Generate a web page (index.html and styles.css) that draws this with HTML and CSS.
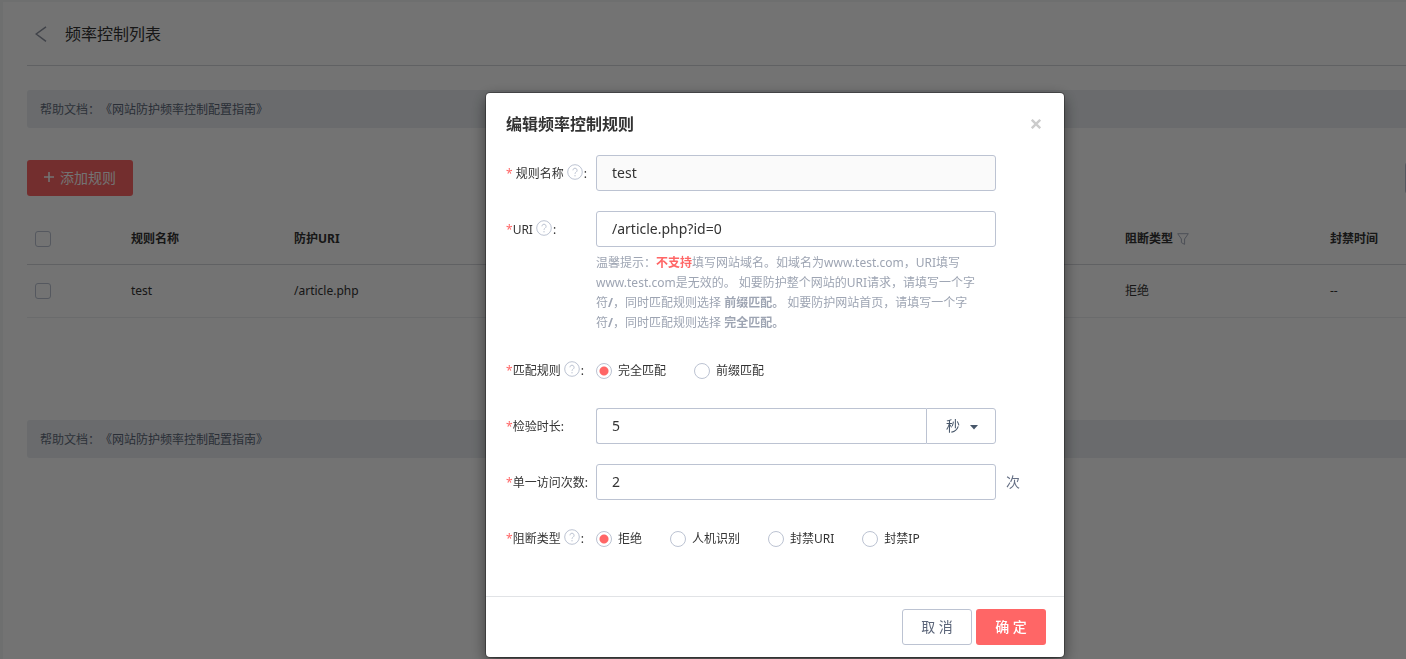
FILE: index.html
```html
<!DOCTYPE html>
<html lang="zh-CN">
<head>
<meta charset="utf-8">
<title>频率控制列表</title>
<link rel="stylesheet" href="styles.css">
</head>
<body>
<div class="viewport">
  <main class="page">
    <header class="page-header">
      <button class="back" type="button" aria-label="返回">
        <svg width="12" height="16" viewBox="0 0 12 16"><path d="M11 .8 1.2 8 11 15.4" fill="none" stroke="currentColor" stroke-width="1.5"/></svg>
      </button>
      <h1 class="page-title">频率控制列表</h1>
    </header>

    <p class="help-bar">帮助文档：<a class="help-link" href="#guide">《网站防护频率控制配置指南》</a></p>

    <div class="toolbar">
      <button class="btn btn-add" type="button">
        <svg width="10" height="10" viewBox="0 0 10 10"><path d="M5 0v10M0 5h10" stroke="currentColor" stroke-width="1.6"/></svg>
        添加规则
      </button>
      <input class="search" type="search" aria-label="搜索">
    </div>

    <table class="rules">
      <colgroup><col class="col-check"><col class="col-name"><col class="col-uri"><col class="col-type"><col></colgroup>
      <thead>
        <tr>
          <th class="check-cell"><input class="checkbox" type="checkbox" aria-label="全选"></th>
          <th>规则名称</th>
          <th>防护URI</th>
          <th><span class="th-filter">阻断类型<svg width="12" height="12" viewBox="0 0 12 12"><path d="M.7.7h10.6L7.6 6v5.4L4.4 9.6V6z" fill="none" stroke="currentColor" stroke-linejoin="round"/></svg></span></th>
          <th>封禁时间</th>
        </tr>
      </thead>
      <tbody>
        <tr>
          <td class="check-cell"><input class="checkbox" type="checkbox" aria-label="选择 test"></td>
          <td>test</td>
          <td>/article.php</td>
          <td>拒绝</td>
          <td>--</td>
        </tr>
      </tbody>
    </table>

    <p class="help-bar">帮助文档：<a class="help-link" href="#guide">《网站防护频率控制配置指南》</a></p>
  </main>
</div>

<div class="backdrop">
  <form class="modal" role="dialog" aria-labelledby="dialog-title">
    <header class="modal-header">
      <h2 class="modal-title" id="dialog-title">编辑频率控制规则</h2>
      <button class="close" type="button" aria-label="关闭">
        <svg width="10" height="10" viewBox="0 0 10 10"><path d="m.8.8 8.4 8.4M9.2.8.8 9.2" stroke="currentColor" stroke-width="2.4"/></svg>
      </button>
    </header>

    <div class="modal-body">
      <div class="row">
        <label class="row-label" for="name"><span class="star">*</span>&nbsp;规则名称<svg class="tip" viewBox="0 0 16 16"><circle cx="8" cy="8" r="7.3"/><path d="M5.9 6.3a2.1 2.1 0 1 1 3.2 1.8Q8 8.8 8 9.8M8 11v1.4"/></svg>:</label>
        <input class="field" id="name" type="text" value="test" readonly>
      </div>

      <div class="row">
        <label class="row-label" for="uri"><span class="star">*</span>URI<svg class="tip" viewBox="0 0 16 16"><circle cx="8" cy="8" r="7.3"/><path d="M5.9 6.3a2.1 2.1 0 1 1 3.2 1.8Q8 8.8 8 9.8M8 11v1.4"/></svg>:</label>
        <div class="row-content">
          <input class="field" id="uri" type="text" value="/article.php?id=0">
          <p class="hint">温馨提示：<strong class="warn">不支持</strong>填写网站域名。如域名为www.test.com，URI填写<br>www.test.com是无效的。 如要防护整个网站的URI请求，请填写一个字<br>符<strong>/</strong>，同时匹配规则选择 <strong>前缀匹配。</strong> 如要防护网站首页，请填写一个字<br>符<strong>/</strong>，同时匹配规则选择 <strong>完全匹配。</strong></p>
        </div>
      </div>

      <div class="row" role="radiogroup" aria-labelledby="match-label">
        <span class="row-label" id="match-label"><span class="star">*</span>匹配规则<svg class="tip" viewBox="0 0 16 16"><circle cx="8" cy="8" r="7.3"/><path d="M5.9 6.3a2.1 2.1 0 1 1 3.2 1.8Q8 8.8 8 9.8M8 11v1.4"/></svg>:</span>
        <div class="radios">
          <label class="option"><input class="radio" type="radio" name="match" checked>完全匹配</label>
          <label class="option"><input class="radio" type="radio" name="match">前缀匹配</label>
        </div>
      </div>

      <div class="row">
        <label class="row-label" for="duration"><span class="star">*</span>检验时长:</label>
        <div class="group">
          <input class="field" id="duration" type="text" value="5">
          <div class="unit">
            <select class="unit-select" aria-label="时间单位"><option>秒</option><option>分</option></select>
            <svg class="caret" width="8" height="5" viewBox="0 0 8 5"><path d="M0 0h8L4 4.5z" fill="currentColor"/></svg>
          </div>
        </div>
      </div>

      <div class="row">
        <label class="row-label" for="count"><span class="star">*</span>单一访问次数:</label>
        <input class="field" id="count" type="text" value="2">
        <span class="suffix">次</span>
      </div>

      <div class="row" role="radiogroup" aria-labelledby="block-label">
        <span class="row-label" id="block-label"><span class="star">*</span>阻断类型<svg class="tip" viewBox="0 0 16 16"><circle cx="8" cy="8" r="7.3"/><path d="M5.9 6.3a2.1 2.1 0 1 1 3.2 1.8Q8 8.8 8 9.8M8 11v1.4"/></svg>:</span>
        <div class="radios">
          <label class="option"><input class="radio" type="radio" name="block" checked>拒绝</label>
          <label class="option"><input class="radio" type="radio" name="block">人机识别</label>
          <label class="option"><input class="radio" type="radio" name="block">封禁URI</label>
          <label class="option"><input class="radio" type="radio" name="block">封禁IP</label>
        </div>
      </div>
    </div>

    <footer class="modal-footer">
      <button class="btn btn-cancel" type="button">取 消</button>
      <button class="btn btn-ok" type="submit">确 定</button>
    </footer>
  </form>
</div>
</body>
</html>
```

FILE: styles.css
```css
* { box-sizing: border-box; }

body, button, input, select {
  font-family: "Noto Sans", "Noto Sans CJK SC", sans-serif;
}

body {
  margin: 0;
  background: #f3f6f6;
  color: #333;
  font-size: 12px;
  line-height: 20px;
  text-spacing-trim: space-all;
  overflow: hidden;
}

h1, h2, p { margin: 0; }

button, input, select { margin: 0; }

.viewport {
  height: 100vh;
  overflow: hidden;
  padding: 2px 0 0 3px;
}

.page {
  min-width: 1550px;
  min-height: 100%;
  padding: 0 24px;
  background: #fff;
}

.page-header {
  display: flex;
  align-items: center;
  gap: 18px;
  height: 64px;
  padding-left: 8px;
  border-bottom: 1px solid #d5d7dc;
}

.back {
  display: flex;
  padding: 0;
  border: 0;
  background: none;
  color: #8f95a3;
}

.page-title {
  font-size: 16px;
  font-weight: 400;
}

.help-bar {
  margin-top: 24px;
  padding: 10px 13px 8px;
  border-radius: 3px;
  background: #ebeef2;
  color: #66707f;
}

.help-link {
  color: #5c6779;
  text-decoration: none;
}

.toolbar {
  display: flex;
  justify-content: space-between;
  align-items: center;
  margin: 32px 0 16px;
}

.btn {
  height: 36px;
  padding: 0 0 2px;
  border: 1px solid transparent;
  border-radius: 3px;
  font-size: 14px;
}

.btn-add {
  display: flex;
  align-items: center;
  justify-content: center;
  gap: 6px;
  width: 106px;
  background: #f66;
  color: #fff;
}

.search {
  width: 124px;
  height: 32px;
  border: 1px solid #bcc3d2;
  border-radius: 3px;
}

.rules {
  width: 100%;
  table-layout: fixed;
  border-collapse: collapse;
  margin-bottom: 102px;
}

.col-check { width: 88px; }
.col-name { width: 163px; }
.col-uri { width: 831px; }
.col-type { width: 205px; }

.rules th, .rules td {
  height: 53px;
  padding: 0 16px;
  border-bottom: 1px solid #ebedf0;
  text-align: left;
}

.rules th {
  height: 52px;
  padding-top: 2px;
  border-color: #d5d7dc;
}

.rules .check-cell {
  padding-left: 8px;
  padding-right: 8px;
}

.th-filter {
  display: flex;
  align-items: center;
  gap: 4px;
}

.th-filter svg { color: #a9b0c0; }

.checkbox, .radio {
  appearance: none;
  display: block;
  flex: none;
  width: 16px;
  height: 16px;
  border: 1px solid #bcc3d2;
  background: #fff;
}

.checkbox { border-radius: 3px; }
.radio { border-radius: 50%; }

.radio:checked {
  background: radial-gradient(circle, #f66 4px, #fff 5px);
}

.backdrop {
  position: fixed;
  inset: 0;
  display: grid;
  grid-template-columns: 486fr 578px 342fr;
  align-items: start;
  padding-top: 93px;
  background: rgba(0, 0, 0, .55);
}

.modal {
  grid-column: 2;
  border-radius: 4px;
  background: #fff;
  box-shadow: 0 0 0 1px rgba(0, 0, 0, .3), 0 5px 15px rgba(0, 0, 0, .5);
}

.modal-header {
  display: flex;
  align-items: center;
  justify-content: space-between;
  height: 62px;
  padding: 0 23px 0 20px;
}

.modal-title {
  font-size: 16px;
  font-weight: 700;
}

.close {
  display: flex;
  padding: 0;
  border: 0;
  background: none;
  color: #ccc;
}

.modal-body {
  display: grid;
  gap: 20px;
  padding: 0 20px 40px;
}

.row {
  display: flex;
  align-items: flex-start;
}

.row-label {
  display: flex;
  align-items: center;
  flex: none;
  width: 90px;
  height: 36px;
  padding-top: 2px;
  white-space: nowrap;
}

.star { color: #f66; }

.tip {
  width: 16px;
  height: 16px;
  margin: 0 1px 4px 3px;
  fill: none;
  stroke: #bcc3d2;
}

.row-content, .group, .row > .field { width: 400px; }

.field {
  display: block;
  width: 100%;
  height: 36px;
  padding: 0 15px 2px;
  border: 1px solid #bcc3d2;
  border-radius: 3px;
  background: #fff;
  color: #333;
  font-size: 14px;
}

.field:read-only { background: #fafafa; }

.hint {
  padding-top: 6px;
  margin-bottom: -1px;
  color: #9ea5b3;
  white-space: nowrap;
}

.hint .warn { color: #f66; }

.radios {
  display: flex;
  align-items: center;
  gap: 28px;
  height: 36px;
  padding-top: 2px;
}

.option {
  display: flex;
  align-items: center;
  gap: 6px;
}

.group { display: flex; }

.group .field {
  flex: 1;
  border-right: 0;
  border-radius: 3px 0 0 3px;
}

.unit {
  position: relative;
  width: 70px;
}

.unit-select {
  appearance: none;
  width: 100%;
  height: 36px;
  padding: 0 19px 2px;
  border: 1px solid #bcc3d2;
  border-radius: 0 3px 3px 0;
  background: #fff;
  color: #475669;
  font-size: 14px;
}

.caret {
  position: absolute;
  top: 17px;
  right: 18px;
  color: #475669;
  pointer-events: none;
}

.suffix {
  margin-left: 10px;
  color: #667085;
  font-size: 14px;
  line-height: 36px;
}

.modal-footer {
  display: flex;
  justify-content: flex-end;
  gap: 4px;
  padding: 12px 18px;
  border-top: 1px solid #e1e3e6;
}

.btn-cancel, .btn-ok { width: 70px; }

.btn-cancel {
  border-color: #bcc3d2;
  background: #fff;
  color: #5b6579;
}

.btn-ok {
  background: #f66;
  color: #fff;
  font-weight: 500;
}
```
